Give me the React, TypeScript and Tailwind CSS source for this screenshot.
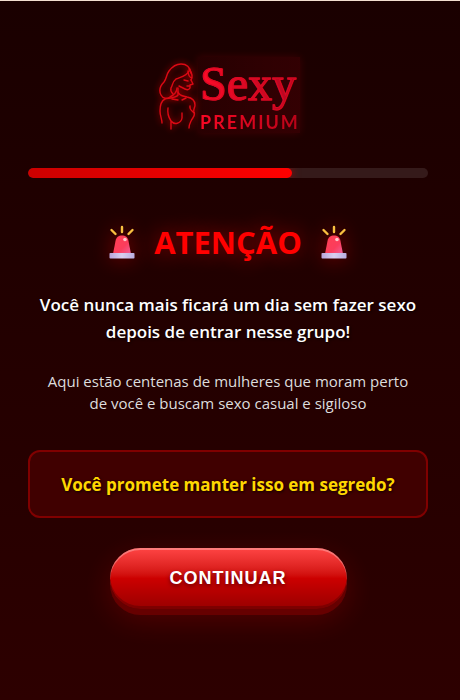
function Siren() {
  return (
    <svg viewBox="0 0 32 36" className="h-9 w-8 drop-shadow-[0_0_10px_rgba(255,0,0,0.4)]" aria-hidden="true">
      <defs>
        <linearGradient id="dome" x1="0" x2="1" y1="0" y2="1">
          <stop offset="0" stopColor="#ff3f52" />
          <stop offset="0.6" stopColor="#fb3d5c" />
          <stop offset="1" stopColor="#f0609a" />
        </linearGradient>
        <linearGradient id="base" x1="0" x2="1">
          <stop offset="0" stopColor="#b9a5da" />
          <stop offset="0.5" stopColor="#d9d0f0" />
          <stop offset="1" stopColor="#b9aee0" />
        </linearGradient>
      </defs>
      <path d="M16 3v5M5.500 6l4 4M26.500 6l-4 4" stroke="#f8c040" strokeWidth="2.400" strokeLinecap="round" />
      <path d="M7 30 9.500 17c.8-4 3-5.500 6.500-5.500s5.700 1.500 6.500 5.500L25 30z" fill="url(#dome)" />
      <circle cx="19" cy="15.500" r="1.800" fill="#ffc4c8" />
      <rect x="3.500" y="29" width="25" height="5.500" rx="0.800" fill="url(#base)" />
    </svg>
  );
}

function Logo() {
  return (
    <div className="flex h-[76px] items-center justify-center">
      <svg
        viewBox="0 0 42 72"
        className="h-[72px] w-[42px] shrink-0 drop-shadow-[0_0_3px_rgba(255,0,0,0.8)]"
        fill="none"
        stroke="#dc0914"
        strokeWidth="1.400"
        strokeLinecap="round"
        strokeLinejoin="round"
        aria-hidden="true"
      >
        <path d="M35 14C34 8 30 5 25 5C20 5 16 8 13 12C10 16 11 19 8 23C4 27 3 32 5 36C7 40 11 40 14 38C18 36 21 33 21 29" />
        <path d="M33 12C31 17 25 18 20 20C16 23 17 26 15 29C14 32 16 34 17 35" />
        <path d="M33 10C36 14 37 18 35 21M32 12C32 16 34 19 36 19" />
        <path d="M35 21L37 25L34 26L34 29C33 31 31 31 29 30L23 27M28 21l4 1M31 27l3 0" />
        <path d="M22 29V36C20 39 13 39 9 40C5 42 4 46 4 52C4 57 6 60 6 64" />
        <path d="M22 33C23 37 27 37 31 38C37 39 39 42 39 46C39 49 37 50 38 53C40 57 36 59 35 62C34 64 33 66 33 69" />
        <path d="M16 40l6 1M26 41l4-2M12 49C11 55 13 59 15 62V70M15 62C18 66 25 65 26 59V54M34 47C33 51 37 52 38 54" />
      </svg>
      <div className="flex flex-col bg-linear-to-r from-[#ff0018]/5 to-[#ff0018]/10 pl-0.5 text-left shadow-[0_0_8px_rgba(255,0,24,0.15)]">
        <span className="bg-linear-to-r from-[#ff0b28] to-[#b00620] bg-clip-text font-['Liberation_Serif',serif] text-5xl leading-[54px] text-transparent [-webkit-text-stroke:1px_#dc0822]">
          Sexy
        </span>
        <span className="bg-linear-to-r from-[#f80824] to-[#b80318] bg-clip-text font-[Lato,sans-serif] text-lg leading-[22px] font-bold tracking-[2px] text-transparent">
          PREMIUM
        </span>
      </div>
    </div>
  );
}

export default function App() {
  return (
    <main className="min-h-screen border-t border-[#f3ded0] bg-linear-to-b from-[#1a0000] to-[#2d0000] pt-14 pr-8 pb-10 pl-7 text-center font-['Open_Sans','Noto_Sans',sans-serif]">
      <Logo />
      <div
        role="progressbar"
        aria-label="Progresso"
        aria-valuenow={66}
        aria-valuemin={0}
        aria-valuemax={100}
        className="mt-[35px] h-2.5 overflow-hidden rounded-full bg-white/10"
      >
        <div className="h-full w-[66%] rounded-full bg-linear-to-r from-[#cc0000] to-[#ff0000] shadow-[0_0_10px_rgba(255,0,0,0.5)]" />
      </div>
      <h1 className="mt-10 flex h-12 items-center justify-center gap-4 text-[31px] font-bold text-[#ff0000] [text-shadow:0_0_20px_rgba(255,0,0,0.5)]">
        <Siren />
        ATENÇÃO
        <Siren />
      </h1>
      <p className="mt-[25px] text-[17px] leading-[27px] font-semibold text-white [text-shadow:1px_1px_3px_rgba(0,0,0,0.8)]">
        Você nunca mais ficará um dia sem fazer sexo
        <br />
        depois de entrar nesse grupo!
      </p>
      <p className="mt-[25px] px-4 text-[15px] leading-[22px] text-[#dddddd]">
        Aqui estão centenas de mulheres que moram perto de você e buscam sexo casual e sigiloso
      </p>
      <div className="mt-9 rounded-xl border-2 border-[#800000] bg-[#400000] pt-5 pb-[18px] text-[17px] leading-[26px] font-bold text-[#ffd700] [text-shadow:1px_1px_3px_rgba(0,0,0,0.8)]">
        Você promete manter isso em segredo?
      </div>
      <button
        type="button"
        className="mt-[30px] rounded-full bg-linear-to-b from-[#ff4444] via-[#cc0000] to-[#990000] px-[60px] py-5 font-['Liberation_Sans',Arial,sans-serif] text-lg leading-[21px] font-bold tracking-[1px] text-white shadow-[0_6px_0_#660000,0_10px_30px_rgba(255,0,0,0.2),inset_0_2px_0_rgba(255,255,255,0.3),inset_0_-3px_0_rgba(0,0,0,0.2)] [text-shadow:0_2px_4px_rgba(0,0,0,0.5)]"
      >
        CONTINUAR
      </button>
    </main>
  );
}
